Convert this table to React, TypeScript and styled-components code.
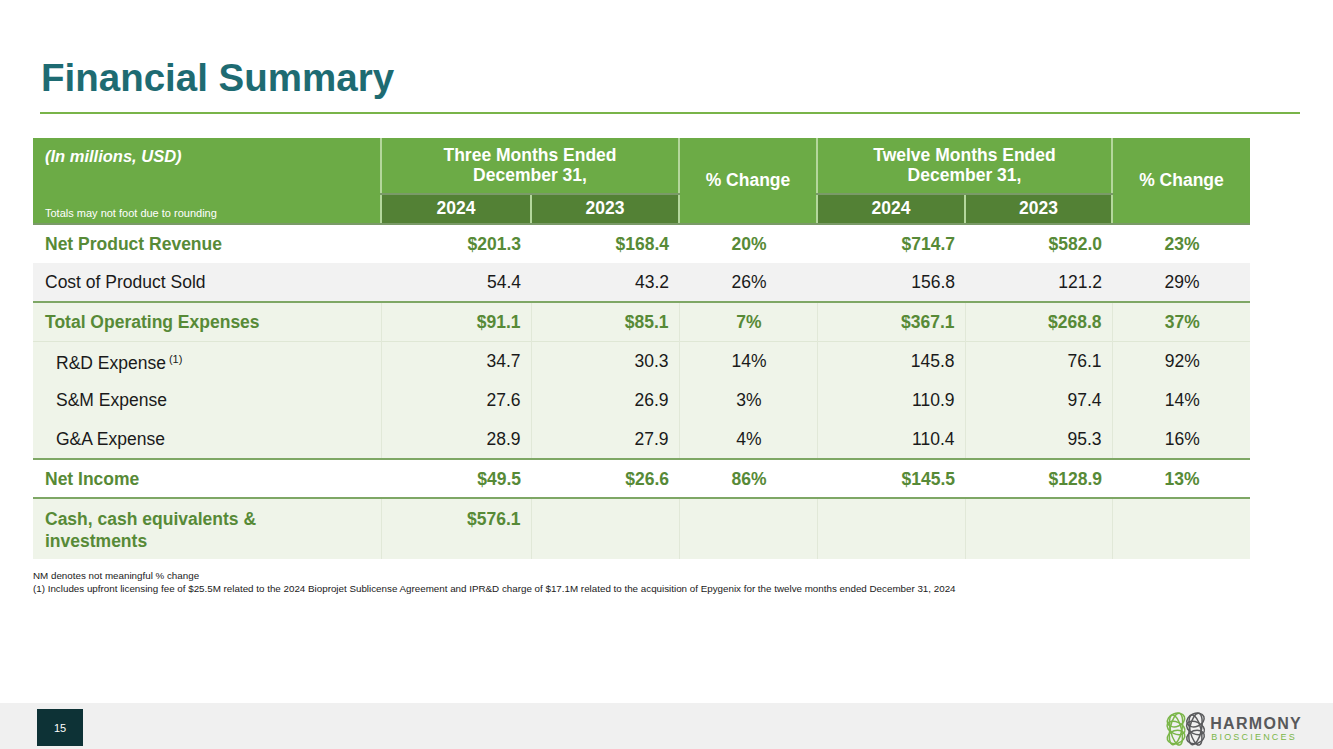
import React from "react"
import styled, { createGlobalStyle } from "styled-components"

const GlobalStyle = createGlobalStyle`
  html, body {
    margin: 0;
    padding: 0;
    background: #ffffff;
    font-family: "Liberation Sans", Arial, sans-serif;
  }
`

const GREEN = "#6cab46"
const DARK_GREEN = "#538135"
const TEXT_GREEN = "#578a37"
const PALE = "#eff4e9"

const Page = styled.div`
  width: 1333px;
  height: 749px;
  display: flex;
  flex-direction: column;
  overflow: hidden;
`

const Content = styled.div`
  flex: 1;
  padding: 59px 33px 0 33px;
`

const Title = styled.h1`
  margin: 0 0 0 8px;
  font-size: 38.5px;
  line-height: 38px;
  font-weight: 700;
  color: #1e6b72;
`

const Rule = styled.div`
  margin: 15px 0 0 7px;
  height: 2px;
  background: #79b449;
`

const Table = styled.table`
  margin-top: 24px;
  width: 1217px;
  table-layout: fixed;
  border-collapse: collapse;
  font-size: 17.5px;
`

const HeadCell = styled.th<{ $dark?: boolean; $h: number }>`
  height: ${(p) => p.$h}px;
  padding: 0;
  background: ${(p) => (p.$dark ? DARK_GREEN : GREEN)};
  color: #ffffff;
  font-weight: 700;
  line-height: 19.5px;
  text-align: center;
  vertical-align: middle;
  border-left: 2px solid #b4d79c;
  border-top: ${(p) => (p.$dark ? "2px solid #b4d79c" : "none")};
  border-bottom: 2px solid #7a9a68;
`

const LabelHead = styled.th`
  padding: 0;
  background: ${GREEN};
  color: #ffffff;
  text-align: left;
  vertical-align: top;
  border-bottom: 2px solid #7a9a68;
`

const LabelStack = styled.div`
  height: 85px;
  display: flex;
  flex-direction: column;
  justify-content: space-between;
  padding: 9px 12px 4px 12px;
  box-sizing: border-box;
`

const Units = styled.span`
  font-style: italic;
  font-weight: 700;
  font-size: 16.5px;
`

const Note = styled.span`
  font-weight: 400;
  font-size: 11px;
`

type Tone = "white" | "gray" | "pale"

const Row = styled.tr<{ $tone: Tone; $rule?: "strong" | "faint" }>`
  background: ${(p) => (p.$tone === "gray" ? "#f2f2f2" : p.$tone === "pale" ? PALE : "#ffffff")};
  border-bottom: ${(p) =>
    p.$rule === "strong" ? "2px solid #7ea765" : p.$rule === "faint" ? "1px solid #dfe7d5" : "none"};
`

const Cell = styled.td<{ $align: "left" | "right" | "center"; $bold?: boolean; $lined?: boolean; $h: number; $indent?: boolean; $top?: boolean }>`
  height: ${(p) => p.$h}px;
  padding: ${(p) => (p.$top ? "9px" : "0")} 10px 0 ${(p) => (p.$indent ? "23px" : "12px")};
  box-sizing: border-box;
  text-align: ${(p) => p.$align};
  vertical-align: ${(p) => (p.$top ? "top" : "middle")};
  font-weight: ${(p) => (p.$bold ? 700 : 400)};
  color: ${(p) => (p.$bold ? TEXT_GREEN : "#1a1a1a")};
  line-height: 22px;
  border-left: ${(p) => (p.$lined ? "1px solid #e1e8d8" : "none")};
  &:first-child {
    border-left: none;
  }
`

const Sup = styled.sup`
  font-size: 11px;
  vertical-align: 6px;
  margin-left: 3px;
`

const Notes = styled.div`
  margin-top: 10px;
  font-size: 9.8px;
  line-height: 13px;
  color: #1a1a1a;
`

const Footer = styled.div`
  height: 46px;
  background: #f0f0f0;
  display: flex;
  align-items: center;
  justify-content: space-between;
  padding: 0 31px 0 37px;
`

const PageNo = styled.div`
  width: 46px;
  height: 37px;
  margin-top: 3px;
  background: #0d3236;
  color: #ffffff;
  font-size: 11px;
  display: flex;
  align-items: center;
  justify-content: center;
`

const Logo = styled.div`
  display: flex;
  align-items: center;
  gap: 3px;
  margin-top: 6px;
`

const Wordmark = styled.div`
  display: flex;
  flex-direction: column;
`

const Brand = styled.span`
  font-size: 16px;
  font-weight: 700;
  letter-spacing: 1.3px;
  color: #58595b;
  line-height: 17px;
`

const Sub = styled.span`
  font-size: 9px;
  letter-spacing: 2.2px;
  color: #7ab648;
  line-height: 11px;
  margin-left: 1px;
`

// tangled loop mark, one ball per colour
const Knot = ({ x, color }: { x: number; color: string }) => (
  <g transform={`translate(${x} 18)`} fill="none" stroke={color} strokeWidth={1.5}>
    <ellipse cx={0} cy={-9} rx={9} ry={6.5} transform="rotate(-22 0 -9)" />
    <ellipse cx={0} cy={-1} rx={9.5} ry={6} transform="rotate(25 0 -1)" />
    <ellipse cx={0} cy={8} rx={9} ry={6.5} transform="rotate(-18 0 8)" />
    <ellipse cx={0} cy={0} rx={6} ry={16} transform="rotate(12 0 0)" />
    <ellipse cx={0} cy={1} rx={5.5} ry={15.5} transform="rotate(-14 0 1)" />
  </g>
)

const LogoMark = () => (
  <svg width="42" height="36" viewBox="0 0 42 36">
    <Knot x={11} color="#7ab648" />
    <Knot x={30.5} color="#5a5b5d" />
  </svg>
)

type Line = {
  label: React.ReactNode
  values: string[]
  tone: Tone
  bold?: boolean
  indent?: boolean
  rule?: "strong" | "faint"
  h?: number
  top?: boolean
}

const rows: Line[] = [
  { label: "Net Product Revenue", values: ["$201.3", "$168.4", "20%", "$714.7", "$582.0", "23%"], tone: "white", bold: true },
  { label: "Cost of Product Sold", values: ["54.4", "43.2", "26%", "156.8", "121.2", "29%"], tone: "gray", rule: "strong" },
  { label: "Total Operating Expenses", values: ["$91.1", "$85.1", "7%", "$367.1", "$268.8", "37%"], tone: "pale", bold: true, rule: "faint" },
  {
    label: (
      <>
        R&amp;D Expense<Sup>(1)</Sup>
      </>
    ),
    values: ["34.7", "30.3", "14%", "145.8", "76.1", "92%"],
    tone: "pale",
    indent: true,
  },
  { label: "S&M Expense", values: ["27.6", "26.9", "3%", "110.9", "97.4", "14%"], tone: "pale", indent: true, h: 40 },
  { label: "G&A Expense", values: ["28.9", "27.9", "4%", "110.4", "95.3", "16%"], tone: "pale", indent: true, rule: "strong" },
  { label: "Net Income", values: ["$49.5", "$26.6", "86%", "$145.5", "$128.9", "13%"], tone: "white", bold: true, rule: "strong" },
  {
    label: (
      <>
        Cash, cash equivalents &amp;
        <br />
        investments
      </>
    ),
    values: ["$576.1", "", "", "", "", ""],
    tone: "pale",
    bold: true,
    h: 61,
    top: true,
  },
]

const widths = [348, 150, 148, 138, 148, 147, 138]

const App = () => {
  return (
    <Page>
      <GlobalStyle />
      <Content>
        <Title>Financial Summary</Title>
        <Rule />
        <Table>
          <colgroup>
            {widths.map((w, i) => (
              <col key={i} style={{ width: w }} />
            ))}
          </colgroup>
          <thead>
            <tr>
              <LabelHead rowSpan={2}>
                <LabelStack>
                  <Units>(In millions, USD)</Units>
                  <Note>Totals may not foot due to rounding</Note>
                </LabelStack>
              </LabelHead>
              <HeadCell colSpan={2} $h={55}>
                Three Months Ended
                <br />
                December 31,
              </HeadCell>
              <HeadCell rowSpan={2} $h={85}>
                % Change
              </HeadCell>
              <HeadCell colSpan={2} $h={55}>
                Twelve Months Ended
                <br />
                December 31,
              </HeadCell>
              <HeadCell rowSpan={2} $h={85}>
                % Change
              </HeadCell>
            </tr>
            <tr>
              <HeadCell $dark $h={28}>2024</HeadCell>
              <HeadCell $dark $h={28}>2023</HeadCell>
              <HeadCell $dark $h={28}>2024</HeadCell>
              <HeadCell $dark $h={28}>2023</HeadCell>
            </tr>
          </thead>
          <tbody>
            {rows.map((r, i) => (
              <Row key={i} $tone={r.tone} $rule={r.rule}>
                <Cell $align="left" $bold={r.bold} $indent={r.indent} $h={r.h ?? 39} $top={r.top}>
                  {r.label}
                </Cell>
                {r.values.map((v, j) => (
                  <Cell
                    key={j}
                    $align={j === 2 || j === 5 ? "center" : "right"}
                    $bold={r.bold}
                    $lined={r.tone === "pale"}
                    $h={r.h ?? 39}
                    $top={r.top}
                  >
                    {v}
                  </Cell>
                ))}
              </Row>
            ))}
          </tbody>
        </Table>
        <Notes>
          NM denotes not meaningful % change
          <br />
          (1) Includes upfront licensing fee of $25.5M related to the 2024 Bioprojet Sublicense Agreement and IPR&amp;D
          charge of $17.1M related to the acquisition of Epygenix for the twelve months ended December 31, 2024
        </Notes>
      </Content>
      <Footer>
        <PageNo>15</PageNo>
        <Logo>
          <LogoMark />
          <Wordmark>
            <Brand>HARMONY</Brand>
            <Sub>BIOSCIENCES</Sub>
          </Wordmark>
        </Logo>
      </Footer>
    </Page>
  )
}

export default App
